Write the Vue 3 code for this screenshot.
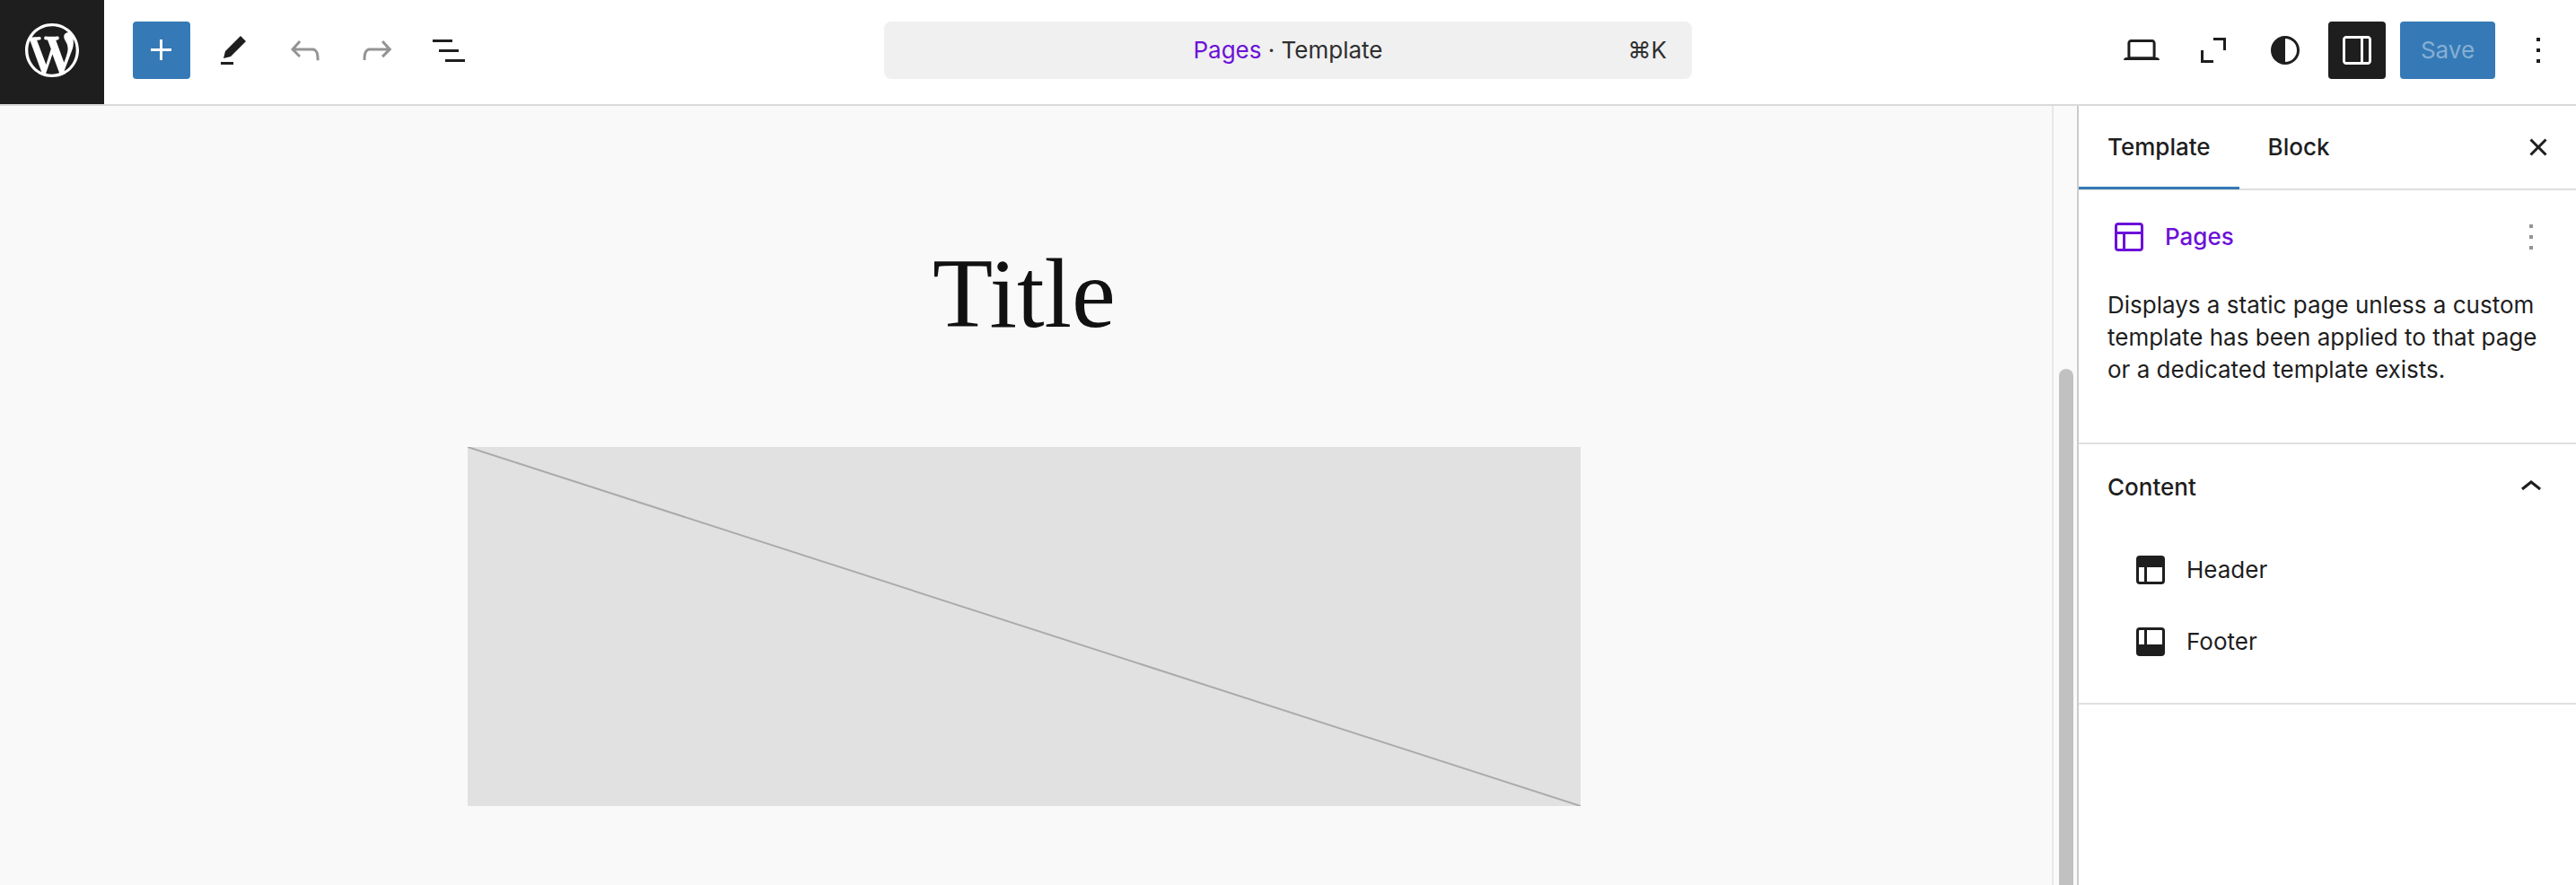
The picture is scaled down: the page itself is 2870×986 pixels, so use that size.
<script setup>
import { ref } from 'vue'

const icons = {
  plus: 'M11 12.5V17.5H12.5V12.5H17.5V11H12.5V6H11V11H6V12.5H11Z',
  edit: 'm19 7-3-3-8.5 8.5-1 4 4-1L19 7Zm-7 11.5H5V20h7v-1.5Z',
  undo: 'M18.3 11.7c-.6-.6-1.4-.9-2.3-.9H6.7l2.9-3.3-1.1-1-4.5 5L8.5 16l1-1-2.7-2.7H16c.5 0 .9.2 1.3.5 1 1 1 3.4 1 4.5v.3h1.5v-.2c0-1.5 0-4.3-1.5-5.7z',
  redo: 'M15.6 6.5l-1.1 1 2.9 3.3H8c-.9 0-1.7.3-2.3.9-1.4 1.5-1.4 4.2-1.4 5.6v.2h1.5v-.3c0-1.1 0-3.5 1-4.5.3-.3.7-.5 1.3-.5h9.2L14.5 15l1.1 1.1 4.6-4.6-4.6-5z',
  list: 'M3 6h11v1.5H3V6Zm3.5 5.5h11V13h-11v-1.5ZM21 17H10v1.5h11V17Z',
  desktop: 'M20.5 16h-.7V8c0-1.1-.9-2-2-2H6.2c-1.1 0-2 .9-2 2v8h-.7c-.8 0-1.5.7-1.5 1.5h20c0-.8-.7-1.5-1.5-1.5zM5.7 8c0-.3.2-.5.5-.5h11.6c.3 0 .5.2.5.5v7.6H5.7V8z',
  expand: 'M12 5v1.5h5.5V12H19V5h-7ZM6.5 12H5v7h7v-1.5H6.5V12Z',
  styles: 'M12 4a8 8 0 1 0 0 16 8 8 0 0 0 0-16Zm0 14.5v-13a6.5 6.5 0 0 1 0 13Z',
  drawer: 'M18 4H6c-1.1 0-2 .9-2 2v12c0 1.1.9 2 2 2h12c1.1 0 2-.9 2-2V6c0-1.1-.9-2-2-2zm-4 14.5H6c-.3 0-.5-.2-.5-.5V6c0-.3.2-.5.5-.5h8v13zm4.5-.5c0 .3-.2.5-.5.5h-2.5v-13H18c.3 0 .5.2.5.5v12z',
  more: 'M13 19h-2v-2h2v2zm0-6h-2v-2h2v2zm0-6h-2V5h2v2z',
  close: 'M12 13.06l3.712 3.713 1.061-1.06L13.061 12l3.712-3.712-1.06-1.06L12 10.938 8.288 7.227l-1.061 1.06L10.939 12l-3.712 3.712 1.06 1.061L12 13.061z',
  layout: 'M18 5.5H6a.5.5 0 00-.5.5v3h13V6a.5.5 0 00-.5-.5zm.5 5H10v8h8a.5.5 0 00.5-.5v-7.5zm-10 0h-3V18a.5.5 0 00.5.5h2.5v-8zM6 4h12a2 2 0 012 2v12a2 2 0 01-2 2H6a2 2 0 01-2-2V6a2 2 0 012-2z',
  header: 'M18.5 10.5H10v8h8a.5.5 0 00.5-.5v-7.5zm-10 0h-3V18a.5.5 0 00.5.5h2.5v-8zM6 4h12a2 2 0 012 2v12a2 2 0 01-2 2H6a2 2 0 01-2-2V6a2 2 0 012-2z',
  footer: 'M18 5.5h-8v8h8.5V6a.5.5 0 00-.5-.5zm-9.5 8h-3V6a.5.5 0 01.5-.5h2.5v8zM6 4h12a2 2 0 012 2v12a2 2 0 01-2 2H6a2 2 0 01-2-2V6a2 2 0 012-2z',
  chevronUp: 'M6.5 12.4L12 8l5.5 4.4-.9 1.2L12 10l-4.5 3.6-1-1.2z',
}

const leftTools = [
  { icon: 'plus', label: 'Toggle block inserter', kind: 'primary' },
  { icon: 'edit', label: 'Tools' },
  { icon: 'undo', label: 'Undo', disabled: true },
  { icon: 'redo', label: 'Redo', disabled: true },
  { icon: 'list', label: 'List view' },
]
const rightTools = [
  { icon: 'desktop', label: 'View' },
  { icon: 'expand', label: 'Zoom out' },
  { icon: 'styles', label: 'Styles' },
  { icon: 'drawer', label: 'Settings', kind: 'pressed' },
]
const tabs = ['Template', 'Block']
const activeTab = ref('Template')
const open = ref(true)
const parts = [
  { icon: 'header', name: 'Header' },
  { icon: 'footer', name: 'Footer' },
]
</script>

<template>
  <div class="editor">
    <header class="topbar">
      <div class="group">
        <a class="logo" href="#" aria-label="Go to the Dashboard">
          <svg viewBox="-2 -2 24 24" aria-hidden="true">
            <path d="M20 10c0-5.51-4.49-10-10-10C4.48 0 0 4.49 0 10c0 5.52 4.48 10 10 10 5.51 0 10-4.48 10-10zM7.78 15.37L4.37 6.22c.55-.02 1.17-.08 1.17-.08.5-.06.44-1.13-.06-1.11 0 0-1.45.11-2.37.11-.18 0-.37 0-.58-.01C4.12 2.69 6.87 1.11 10 1.11c2.33 0 4.45.87 6.05 2.34-.68-.11-1.65.39-1.65 1.58 0 .74.45 1.36.9 2.1.35.61.55 1.36.55 2.46 0 1.49-1.4 5-1.4 5l-3.03-8.37c.54-.02.82-.17.82-.17.5-.05.44-1.25-.06-1.22 0 0-1.44.12-2.38.12-.87 0-2.33-.12-2.33-.12-.5-.03-.56 1.2-.06 1.22l.92.08 1.26 3.41zM17.41 10c.24-.64.74-1.87.43-4.25.7 1.29 1.05 2.71 1.05 4.25 0 3.29-1.73 6.24-4.4 7.78.97-2.59 1.94-5.2 2.92-7.78zM6.1 18.09C3.12 16.65 1.11 13.53 1.11 10c0-1.3.23-2.48.72-3.59C3.25 10.3 4.67 14.2 6.1 18.09zm4.03-6.63l2.58 6.98c-.86.29-1.76.45-2.71.45-.79 0-1.57-.11-2.29-.33.81-2.38 1.62-4.74 2.42-7.1z" />
          </svg>
        </a>
        <button
          v-for="t in leftTools"
          :key="t.icon"
          type="button"
          class="tool"
          :class="t.kind"
          :disabled="t.disabled"
          :aria-label="t.label"
        >
          <svg class="icon" viewBox="0 0 24 24" aria-hidden="true"><path :d="icons[t.icon]" /></svg>
        </button>
      </div>

      <button type="button" class="command">
        <span class="command-title"><span class="accent">Pages</span> · Template</span>
        <span class="shortcut">⌘K</span>
      </button>

      <div class="group end">
        <button
          v-for="t in rightTools"
          :key="t.icon"
          type="button"
          class="tool"
          :class="t.kind"
          :aria-label="t.label"
        >
          <svg class="icon" viewBox="0 0 24 24" aria-hidden="true"><path :d="icons[t.icon]" /></svg>
        </button>
        <button type="button" class="save" disabled>Save</button>
        <button type="button" class="tool" aria-label="Options">
          <svg class="icon" viewBox="0 0 24 24" aria-hidden="true"><path :d="icons.more" /></svg>
        </button>
      </div>
    </header>

    <div class="body">
      <main class="canvas">
        <h1 class="title">Title</h1>
        <div class="placeholder">
          <svg viewBox="0 0 100 100" preserveAspectRatio="none" aria-hidden="true">
            <line x1="0" y1="0" x2="100" y2="100" vector-effect="non-scaling-stroke" />
          </svg>
        </div>
      </main>
      <div class="track" aria-hidden="true"><div class="thumb"></div></div>

      <aside class="sidebar">
        <div class="tabs">
          <div class="tablist" role="tablist">
            <button
              v-for="tab in tabs"
              :key="tab"
              type="button"
              role="tab"
              class="tab"
              :class="{ active: tab === activeTab }"
              :aria-selected="tab === activeTab"
              @click="activeTab = tab"
            >{{ tab }}</button>
          </div>
          <button type="button" class="tool" aria-label="Close Settings">
            <svg class="icon" viewBox="0 0 24 24" aria-hidden="true"><path :d="icons.close" /></svg>
          </button>
        </div>

        <section class="summary">
          <div class="summary-head">
            <svg class="icon" viewBox="0 0 24 24" aria-hidden="true"><path :d="icons.layout" /></svg>
            <h2 class="summary-title">Pages</h2>
            <button type="button" class="plain" aria-label="Actions" disabled>
              <svg class="icon" viewBox="0 0 24 24" aria-hidden="true"><path :d="icons.more" /></svg>
            </button>
          </div>
          <p class="description">Displays a static page unless a custom template has been applied to that page or a dedicated template exists.</p>
        </section>

        <section class="panel">
          <button type="button" class="panel-toggle" :aria-expanded="open" @click="open = !open">
            <span>Content</span>
            <svg class="icon" viewBox="0 0 24 24" aria-hidden="true"><path :d="icons.chevronUp" /></svg>
          </button>
          <div v-if="open" class="parts">
            <button v-for="p in parts" :key="p.name" type="button" class="part">
              <svg class="icon" viewBox="0 0 24 24" aria-hidden="true"><path fill-rule="evenodd" :d="icons[p.icon]" /></svg>
              <span>{{ p.name }}</span>
            </button>
          </div>
        </section>
      </aside>
    </div>
  </div>
</template>

<style>
body {
  margin: 0;
}
</style>

<style scoped>
.editor,
.editor * {
  box-sizing: border-box;
}
.editor {
  display: flex;
  flex-direction: column;
  min-height: 100vh;
  background: #fff;
  color: #1e1e1e;
  font-family: Inter, "Liberation Sans", sans-serif;
  font-size: 26px;
  line-height: 36px;
}
button {
  margin: 0;
  padding: 0;
  border: 0;
  background: none;
  color: inherit;
  font: inherit;
}
.icon {
  display: block;
  flex: none;
  width: 48px;
  height: 48px;
  fill: currentColor;
}

.topbar {
  display: grid;
  grid-template-columns: 1fr minmax(0, 900px) 1fr;
  grid-template-rows: 112px;
  align-items: center;
  padding-bottom: 4px;
  border-bottom: 2px solid #dadada;
}
.group {
  display: flex;
  align-items: center;
  gap: 16px;
  height: 112px;
}
.end {
  justify-content: flex-end;
  padding-right: 10px;
}
.logo {
  display: grid;
  place-items: center;
  align-self: flex-start;
  width: 116px;
  height: 116px;
  margin-right: 16px;
  padding-bottom: 4px;
  background: #1e1e1e;
}
.logo svg {
  width: 72px;
  height: 72px;
  fill: #fff;
}
.tool {
  display: grid;
  place-items: center;
  flex: none;
  width: 64px;
  height: 64px;
  border-radius: 4px;
}
.tool:disabled,
.plain:disabled {
  color: #949494;
}
.primary {
  background: #357ab6;
  color: #fff;
}
.pressed {
  background: #1e1e1e;
  color: #fff;
}
.command {
  display: grid;
  grid-template-columns: 1fr auto 1fr;
  align-items: center;
  height: 64px;
  padding: 0 28px;
  border-radius: 8px;
  background: #f0f0f0;
  color: #2f2f2f;
}
.command-title {
  grid-column: 2;
}
.shortcut {
  justify-self: end;
}
.accent {
  color: #6c11d9;
}
.save {
  min-width: 106px;
  height: 64px;
  padding: 0 20px;
  border-radius: 4px;
  background: #357ab6;
  color: #86afd3;
}

.body {
  display: flex;
  flex: 1;
}
.canvas {
  display: flex;
  flex: 1;
  flex-direction: column;
  align-items: center;
  min-width: 0;
  padding: 146px 4px 88px 0;
  background: #f9f9f9;
}
.title {
  margin: 0 0 108px;
  color: #111;
  font-family: "Liberation Serif", serif;
  font-size: 110px;
  font-weight: 400;
  line-height: 126px;
}
.placeholder {
  width: 100%;
  max-width: 1240px;
  height: 400px;
  background: #e1e1e1;
}
.placeholder svg {
  display: block;
  width: 100%;
  height: 100%;
}
.placeholder line {
  stroke: #aaa;
  stroke-width: 2px;
}
.track {
  display: flex;
  width: 28px;
  padding: 293px 4px 0 6px;
  border-left: 2px solid #e8e8e8;
  background: #fafafa;
}
.thumb {
  flex: 1;
  border-radius: 8px 8px 0 0;
  background: #c1c1c1;
}

.sidebar {
  flex: none;
  width: 556px;
  border-left: 2px solid #ccc;
}
.tabs {
  display: flex;
  align-items: center;
  justify-content: space-between;
  height: 94px;
  padding-right: 10px;
  border-bottom: 2px solid #ddd;
}
.tablist {
  display: flex;
  height: 94px;
}
.tab {
  padding: 0 32px;
  font-weight: 500;
}
.active {
  box-shadow: inset 0 -3px #357ab6;
}
.summary {
  padding: 28px 26px 63px 32px;
}
.summary-head {
  display: flex;
  align-items: center;
  gap: 16px;
  margin-bottom: 34px;
  color: #6c11d9;
}
.summary-title {
  flex: 1;
  margin: 0;
  font-size: 26px;
  font-weight: 500;
}
.description {
  margin: 0;
}
.panel {
  border-top: 2px solid #e0e0e0;
  border-bottom: 2px solid #e0e0e0;
}
.panel-toggle {
  display: flex;
  align-items: center;
  justify-content: space-between;
  width: 100%;
  height: 96px;
  padding: 0 26px 0 32px;
  font-weight: 500;
}
.parts {
  display: flex;
  flex-direction: column;
  gap: 16px;
  padding: 12px 32px 36px;
}
.part {
  display: flex;
  align-items: center;
  gap: 16px;
  height: 64px;
  padding: 0 24px;
}
</style>
